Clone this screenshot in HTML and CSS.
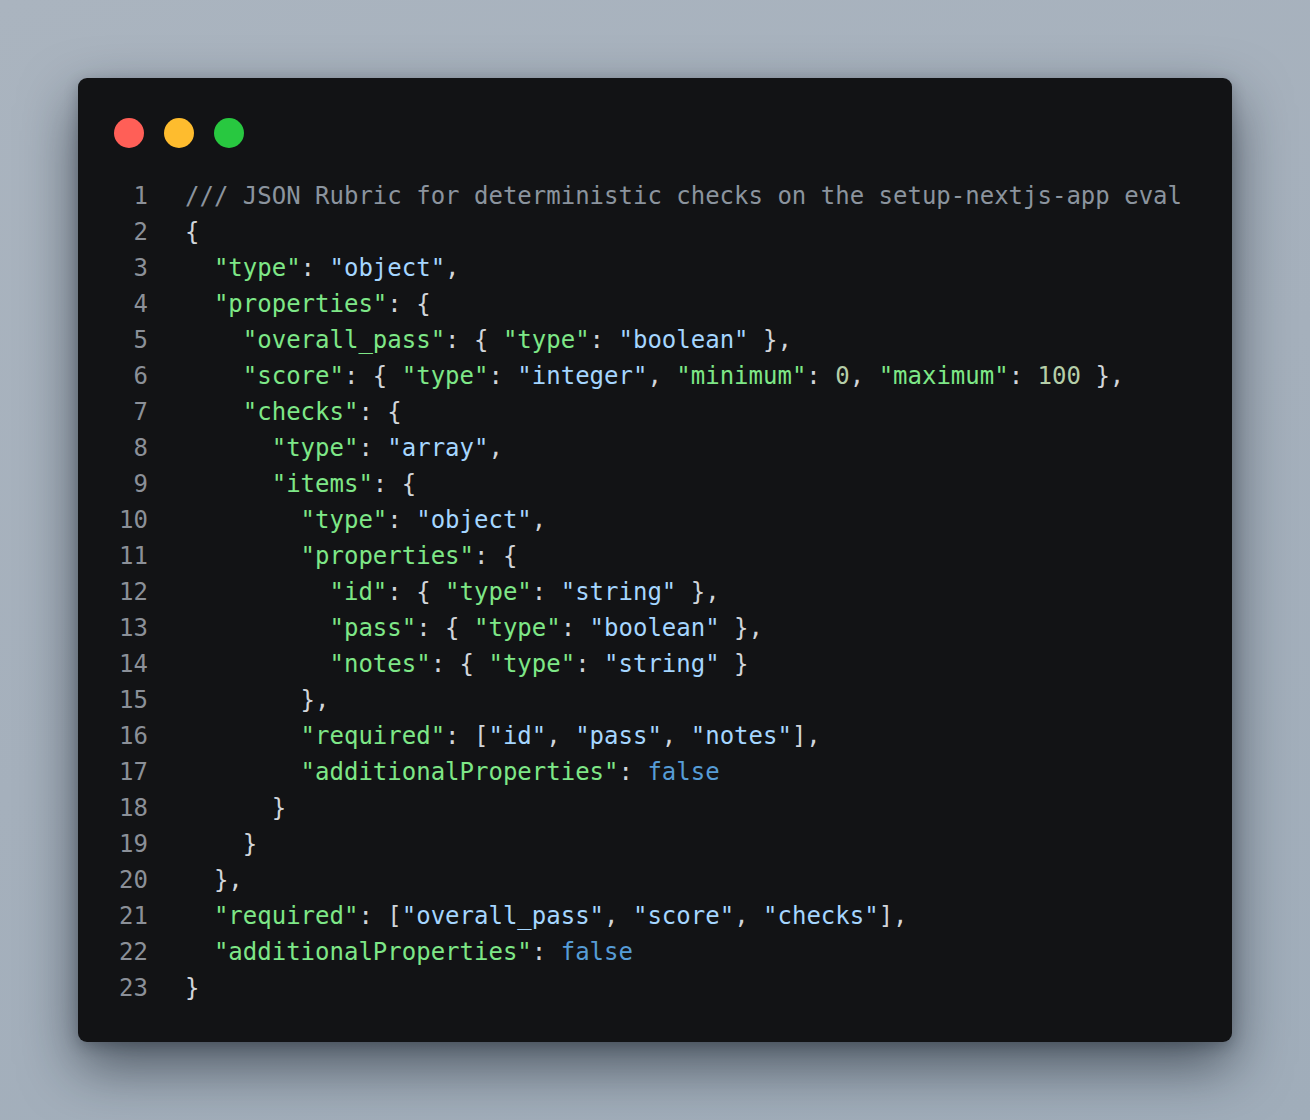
FILE: index.html
```html
<!DOCTYPE html>
<html>
<head>
<meta charset="utf-8">
<link rel="stylesheet" href="styles.css">
</head>
<body>
<div class="window">
  <div class="dots">
    <span class="dot red"></span>
    <span class="dot yellow"></span>
    <span class="dot green"></span>
  </div>
  <div class="code">
    <div class="line"><span class="ln">1</span><span class="src"><span class="c">/// JSON Rubric for deterministic checks on the setup-nextjs-app eval</span></span></div>
    <div class="line"><span class="ln">2</span><span class="src">{</span></div>
    <div class="line"><span class="ln">3</span><span class="src">  <span class="k">"type"</span>: <span class="s">"object"</span>,</span></div>
    <div class="line"><span class="ln">4</span><span class="src">  <span class="k">"properties"</span>: {</span></div>
    <div class="line"><span class="ln">5</span><span class="src">    <span class="k">"overall_pass"</span>: { <span class="k">"type"</span>: <span class="s">"boolean"</span> },</span></div>
    <div class="line"><span class="ln">6</span><span class="src">    <span class="k">"score"</span>: { <span class="k">"type"</span>: <span class="s">"integer"</span>, <span class="k">"minimum"</span>: <span class="n">0</span>, <span class="k">"maximum"</span>: <span class="n">100</span> },</span></div>
    <div class="line"><span class="ln">7</span><span class="src">    <span class="k">"checks"</span>: {</span></div>
    <div class="line"><span class="ln">8</span><span class="src">      <span class="k">"type"</span>: <span class="s">"array"</span>,</span></div>
    <div class="line"><span class="ln">9</span><span class="src">      <span class="k">"items"</span>: {</span></div>
    <div class="line"><span class="ln">10</span><span class="src">        <span class="k">"type"</span>: <span class="s">"object"</span>,</span></div>
    <div class="line"><span class="ln">11</span><span class="src">        <span class="k">"properties"</span>: {</span></div>
    <div class="line"><span class="ln">12</span><span class="src">          <span class="k">"id"</span>: { <span class="k">"type"</span>: <span class="s">"string"</span> },</span></div>
    <div class="line"><span class="ln">13</span><span class="src">          <span class="k">"pass"</span>: { <span class="k">"type"</span>: <span class="s">"boolean"</span> },</span></div>
    <div class="line"><span class="ln">14</span><span class="src">          <span class="k">"notes"</span>: { <span class="k">"type"</span>: <span class="s">"string"</span> }</span></div>
    <div class="line"><span class="ln">15</span><span class="src">        },</span></div>
    <div class="line"><span class="ln">16</span><span class="src">        <span class="k">"required"</span>: [<span class="s">"id"</span>, <span class="s">"pass"</span>, <span class="s">"notes"</span>],</span></div>
    <div class="line"><span class="ln">17</span><span class="src">        <span class="k">"additionalProperties"</span>: <span class="b">false</span></span></div>
    <div class="line"><span class="ln">18</span><span class="src">      }</span></div>
    <div class="line"><span class="ln">19</span><span class="src">    }</span></div>
    <div class="line"><span class="ln">20</span><span class="src">  },</span></div>
    <div class="line"><span class="ln">21</span><span class="src">  <span class="k">"required"</span>: [<span class="s">"overall_pass"</span>, <span class="s">"score"</span>, <span class="s">"checks"</span>],</span></div>
    <div class="line"><span class="ln">22</span><span class="src">  <span class="k">"additionalProperties"</span>: <span class="b">false</span></span></div>
    <div class="line"><span class="ln">23</span><span class="src">}</span></div>
  </div>
</div>
</body>
</html>
```
FILE: styles.css
```css
html, body {
  margin: 0;
  padding: 0;
}
body {
  width: 1310px;
  height: 1120px;
  background: linear-gradient(160deg, #aab4bf 0%, #a5b0bc 50%, #a0adba 100%);
  padding: 78px 78px 0 78px;
  box-sizing: border-box;
}
.window {
  width: 1154px;
  height: 964px;
  box-sizing: border-box;
  background: #121315;
  border-radius: 9px;
  padding: 40px 36px 0 36px;
  box-shadow: 0 24px 56px rgba(20, 28, 38, 0.6), 0 4px 14px rgba(20, 28, 38, 0.25);
}
.dots {
  display: flex;
  gap: 20px;
  height: 30px;
}
.dot {
  width: 30px;
  height: 30px;
  border-radius: 50%;
  display: block;
}
.red { background: #ff5f57; }
.yellow { background: #febc2e; }
.green { background: #28c840; }
.code {
  margin-top: 30px;
  padding-left: 5px;
  font-family: "DejaVu Sans Mono", "Liberation Mono", monospace;
  font-size: 24px;
  line-height: 36px;
  color: #d1d5da;
}
.line {
  display: flex;
  white-space: pre;
}
.ln {
  width: 29px;
  text-align: right;
  color: #8b9098;
  margin-right: 37px;
  flex: none;
}
.src { white-space: pre; }
.c { color: #8b949e; }
.k { color: #7ee787; }
.s { color: #a5d6ff; }
.n { color: #b5cea8; }
.b { color: #569cd6; }
```
